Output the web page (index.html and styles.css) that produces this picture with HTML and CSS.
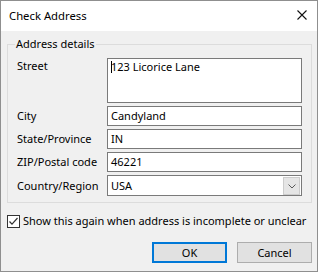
FILE: index.html
```html
<!DOCTYPE html>
<html>
<head>
<meta charset="utf-8">
<title>Check Address</title>
<link rel="stylesheet" href="styles.css">
</head>
<body>
<div class="window">
  <div class="titlebar">
    <span class="title">Check Address</span>
    <svg class="close" width="10" height="10" viewBox="0 0 10 10"><path d="M0.5 0.5 L9.5 9.5 M9.5 0.5 L0.5 9.5" stroke="#111" stroke-width="1.1" fill="none"/></svg>
  </div>
  <div class="content">
    <fieldset class="group">
      <legend class="group-title">Address details</legend>
      <div class="grid">
        <div class="label label-top">Street</div>
        <div class="field field-multi"><span class="caret"></span>123 Licorice Lane</div>
        <div class="label">City</div>
        <div class="field">Candyland</div>
        <div class="label">State/Province</div>
        <div class="field">IN</div>
        <div class="label">ZIP/Postal code</div>
        <div class="field">46221</div>
        <div class="label">Country/Region</div>
        <div class="field combo">
          <span class="combo-text">USA</span>
          <span class="combo-btn"><svg width="8" height="5" viewBox="0 0 8 5"><path d="M0.5 0.5 L4 4 L7.5 0.5" stroke="#5a5a5a" stroke-width="1" fill="none"/></svg></span>
        </div>
      </div>
    </fieldset>
    <label class="check">
      <span class="checkbox"><svg width="11" height="11" viewBox="0 0 11 11"><path d="M1.5 5.5 L4 8.2 L9.5 2" stroke="#333" stroke-width="1.2" fill="none"/></svg></span>
      <span class="check-text">Show this again when address is incomplete or unclear</span>
    </label>
    <div class="buttons">
      <div class="btn btn-default">OK</div>
      <div class="btn">Cancel</div>
    </div>
  </div>
</div>
</body>
</html>
```
FILE: styles.css
```css
* { box-sizing: border-box; }
html, body { margin: 0; padding: 0; }
body {
  font-family: "Noto Sans", "Open Sans", sans-serif;
  font-size: 11px;
  color: #000;
  background: #fff;
}
.window {
  width: 318px;
  height: 272px;
  border: 1px solid #8f8f8f;
  display: flex;
  flex-direction: column;
  background: #f0f0f0;
}
.titlebar {
  height: 30px;
  flex: none;
  background: #fff;
  display: flex;
  align-items: center;
  justify-content: space-between;
  padding: 0 10px 0 8px;
}
.title {
  font-size: 11.3px;
  line-height: 30px;
}
.close {
  display: block;
  margin-bottom: 2px;
}
.content {
  flex: 1;
  display: flex;
  flex-direction: column;
  padding: 5px 5px 0 6px;
}
.group {
  margin: 0;
  min-width: 0;
  border: 1px solid #dcdcdc;
  padding: 6px 9px 6px 9px;
}
.group-title {
  line-height: 16px;
  padding: 0 1px;
  margin-left: -2px;
}
.grid {
  display: grid;
  grid-template-columns: 90px 195px;
  row-gap: 3px;
}
.label {
  align-self: center;
  line-height: 18px;
  white-space: nowrap;
}
.label-top {
  align-self: start;
  line-height: 15px;
}
.field {
  height: 20px;
  border: 1px solid #7a7a7a;
  background: #fff;
  padding: 0 3px;
  line-height: 18px;
  white-space: nowrap;
}
.field-multi {
  height: 45px;
  line-height: 15px;
  padding-top: 0;
}
.caret {
  display: inline-block;
  width: 1px;
  height: 12px;
  background: #000;
  vertical-align: -2px;
  margin-right: -1px;
}
.combo {
  height: 21px;
  display: flex;
  padding: 1px 1px 0 3px;
}
.combo-text {
  flex: 1;
  line-height: 19px;
  margin-top: -1px;
}
.combo-btn {
  width: 17px;
  height: 18px;
  background: #e5e5e5;
  border: 1px solid #cccccc;
  display: flex;
  align-items: center;
  justify-content: center;
  padding-top: 1px;
}
.combo-btn svg { display: block; }
.check {
  display: flex;
  align-items: flex-start;
  margin-top: 10px;
  line-height: 16px;
}
.checkbox {
  width: 13px;
  height: 13px;
  margin-top: 2px;
  border: 1px solid #333;
  background: #fff;
  display: flex;
  align-items: center;
  justify-content: center;
}
.checkbox svg { display: block; }
.check-text {
  margin-left: 3px;
  white-space: nowrap;
}
.buttons {
  display: flex;
  justify-content: flex-end;
  gap: 10px;
  margin-top: 13px;
}
.btn {
  width: 75px;
  height: 21px;
  background: #e1e1e1;
  border: 1px solid #adadad;
  display: flex;
  align-items: center;
  justify-content: center;
  line-height: 15px;
}
.btn-default {
  border: 2px solid #0078d7;
}
```
